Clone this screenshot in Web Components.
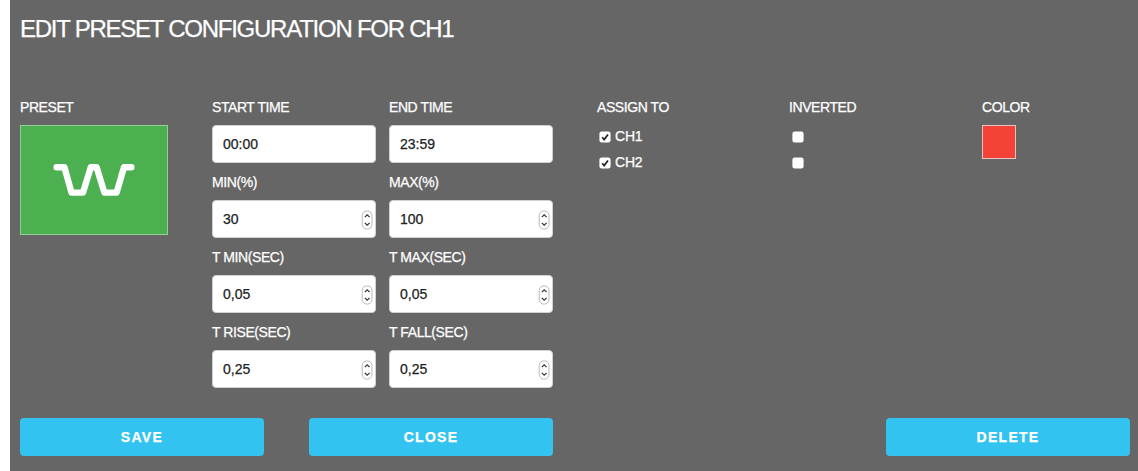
<!DOCTYPE html>
<html lang="en">
<head>
<meta charset="utf-8">
<title>Edit preset configuration</title>
<style>
  body {
    margin: 0;
    background: #fff;
    font-family: "Liberation Sans", Arial, sans-serif;
    font-size: 14px;
    color: #fff;
    -webkit-text-stroke: 0.25px;
  }
</style>
</head>
<body>
<preset-editor></preset-editor>

<script>
const html = String.raw;

class BaseElement extends HTMLElement {
  constructor() {
    super();
    this.shadow = this.attachShadow({ mode: "open" });
  }

  connectedCallback() {
    this.shadow.innerHTML = this.render();
  }
}

// Caption above any control
class FieldGroup extends BaseElement {
  render() {
    return html`
      <style>
        :host { display: flex; flex-direction: column; align-items: flex-start; gap: 7px; }
        label {
          line-height: 22px;
          letter-spacing: -0.42px;
          white-space: nowrap;
        }
      </style>
      <label>${this.getAttribute("label")}</label>
      <slot></slot>
    `;
  }
}

class InputBox extends BaseElement {
  render() {
    const spinner = html`
      <svg width="12" height="20" viewBox="0 0 12 20" fill="none">
        <rect x="1.2" y="0.9" width="9.8" height="18.2" rx="4.6" stroke="#b9b9b9" />
        <path d="M3.8 7.2 6.2 4.8 8.6 7.2M3.8 12.8 6.2 15.2 8.6 12.8" stroke="#333" stroke-width="1.2" />
      </svg>
    `;

    return html`
      <style>
        :host {
          display: flex;
          align-items: center;
          justify-content: space-between;
          box-sizing: border-box;
          width: 164px;
          height: 38px;
          padding: 0 2px 0 10px;
          border: 1px solid #d1d1d1;
          border-radius: 4px;
          background: #fff;
          color: #222;
        }
        svg { margin-top: 1px; }
      </style>
      <span><slot></slot></span>
      ${this.hasAttribute("number") ? spinner : ""}
    `;
  }
}

class CheckOption extends BaseElement {
  render() {
    const tick = html`<path d="M3.2 6.2 5.2 8.6 9 3.4" stroke="#222" stroke-width="1.7" fill="none" />`;

    return html`
      <style>
        :host { display: flex; align-items: center; gap: 4px; height: 22px; letter-spacing: -0.2px; }
        svg { margin: 2px 0 0 2px; }
      </style>
      <svg width="12" height="12" viewBox="0 0 12 12">
        <rect x="0.4" y="0.4" width="11.2" height="11.2" rx="2.4" fill="#fff" />
        ${this.hasAttribute("checked") ? tick : ""}
      </svg>
      <slot></slot>
    `;
  }
}

class PresetTile extends BaseElement {
  render() {
    return html`
      <style>
        :host {
          display: block;
          box-sizing: border-box;
          width: 148px;
          height: 110px;
          border: 1px solid #94cf96;
          background: #4caf50;
        }
        svg { display: block; }
      </style>
      <svg width="146" height="108" viewBox="1 1 146 108" fill="none" stroke="#fff"
        stroke-width="6.4" stroke-linecap="round" stroke-linejoin="round">
        <path d="M36.6 42.2H44.4L51.5 67.6H63L70.8 42.2H76.6L84.4 67.6H96.6L104 42.2H111.4" />
      </svg>
    `;
  }
}

class ColorSwatch extends BaseElement {
  render() {
    return html`
      <style>
        :host {
          display: block;
          box-sizing: border-box;
          width: 34px;
          height: 34px;
          border: 1px solid #e6c4c1;
          background: #f44336;
        }
      </style>
    `;
  }
}

class ActionButton extends BaseElement {
  render() {
    return html`
      <style>
        :host { display: block; width: 244px; }
        button {
          display: block;
          width: 100%;
          height: 38px;
          padding: 0;
          border: 0;
          border-radius: 4px;
          background: #33c3f0;
          color: #fff;
          font: bold 14px/38px "Liberation Sans", Arial, sans-serif;
          letter-spacing: 1.3px;
        }
      </style>
      <button><slot></slot></button>
    `;
  }
}

class PresetEditor extends BaseElement {
  render() {
    return html`
      <style>
        :host {
          display: flex;
          flex-direction: column;
          box-sizing: border-box;
          height: 471px;
          margin-left: 10px;
          padding: 11px 8px 0 10px;
          background: #666;
        }
        h1 {
          margin: 0 0 49px;
          font-size: 24px;
          font-weight: 400;
          line-height: 36px;
          letter-spacing: -1.25px;
          white-space: nowrap;
        }
        .columns {
          display: grid;
          grid-template-columns: 192px 385px 192px 193px 1fr;
          align-items: start;
        }
        .fields {
          display: grid;
          grid-template-columns: 164px 164px;
          gap: 8px 13px;
        }
        .options { display: flex; flex-direction: column; gap: 4px; }
        .inverted { padding-left: 1px; }
        .actions { display: flex; gap: 45px; margin-top: 30px; }
        .last { margin-left: auto; }
      </style>

      <h1>EDIT PRESET CONFIGURATION FOR CH1</h1>
      <div class="columns">
        <field-group label="PRESET"><preset-tile></preset-tile></field-group>
        <div class="fields">
          <field-group label="START TIME"><input-box>00:00</input-box></field-group>
          <field-group label="END TIME"><input-box>23:59</input-box></field-group>
          <field-group label="MIN(%)"><input-box number>30</input-box></field-group>
          <field-group label="MAX(%)"><input-box number>100</input-box></field-group>
          <field-group label="T MIN(SEC)"><input-box number>0,05</input-box></field-group>
          <field-group label="T MAX(SEC)"><input-box number>0,05</input-box></field-group>
          <field-group label="T RISE(SEC)"><input-box number>0,25</input-box></field-group>
          <field-group label="T FALL(SEC)"><input-box number>0,25</input-box></field-group>
        </div>
        <field-group label="ASSIGN TO">
          <div class="options">
            <check-option checked>CH1</check-option>
            <check-option checked>CH2</check-option>
          </div>
        </field-group>
        <field-group label="INVERTED">
          <div class="options inverted">
            <check-option></check-option>
            <check-option></check-option>
          </div>
        </field-group>
        <field-group label="COLOR"><color-swatch></color-swatch></field-group>
      </div>
      <div class="actions">
        <action-button>SAVE</action-button>
        <action-button>CLOSE</action-button>
        <action-button class="last">DELETE</action-button>
      </div>
    `;
  }
}

customElements.define("field-group", FieldGroup);
customElements.define("input-box", InputBox);
customElements.define("check-option", CheckOption);
customElements.define("preset-tile", PresetTile);
customElements.define("color-swatch", ColorSwatch);
customElements.define("action-button", ActionButton);
customElements.define("preset-editor", PresetEditor);
</script>
</body>
</html>
